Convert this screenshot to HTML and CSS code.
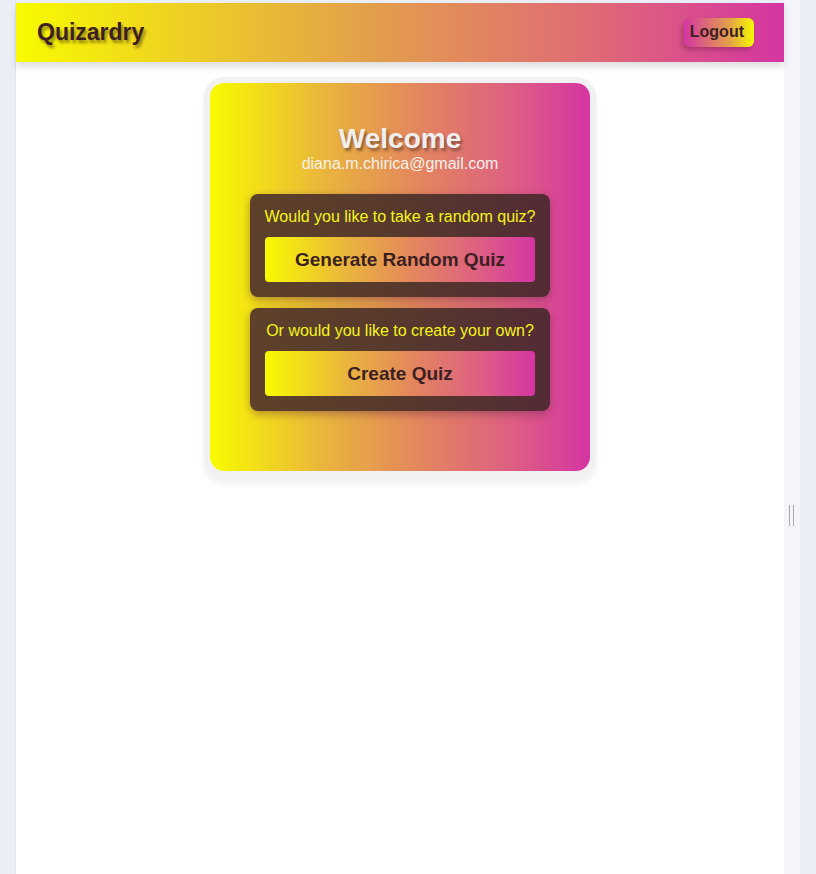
FILE: index.html
```html
<!DOCTYPE html>
<html>
<head>
<meta charset="utf-8">
<link rel="stylesheet" href="styles.css">
</head>
<body>
<div class="frame">
  <div class="gutter-left"></div>
  <div class="page">
    <header class="topbar">
      <div class="brand">Quizardry</div>
      <button class="logout">Logout</button>
    </header>
    <main class="content">
      <section class="card">
        <h1 class="welcome">Welcome</h1>
        <div class="email">diana.m.chirica@gmail.com</div>
        <div class="panel">
          <p class="prompt">Would you like to take a random quiz?</p>
          <button class="action">Generate Random Quiz</button>
        </div>
        <div class="panel">
          <p class="prompt">Or would you like to create your own?</p>
          <button class="action">Create Quiz</button>
        </div>
      </section>
    </main>
  </div>
  <div class="side-panel"><span class="handle"></span></div>
  <div class="gutter-right"></div>
</div>
</body>
</html>
```
FILE: styles.css
```css
html, body {
  margin: 0;
  padding: 0;
  height: 100%;
}
body {
  background: #e9eef7;
  font-family: "Liberation Sans", Arial, sans-serif;
  overflow: hidden;
}
.frame {
  display: flex;
  height: 874px;
}
.gutter-left {
  width: 15px;
  border-right: 1px solid #dfe4ee;
  background: #e9eef7;
}
.page {
  width: 768px;
  margin-top: 3px;
  background: #ffffff;
  display: flex;
  flex-direction: column;
}
.side-panel {
  width: 16px;
  background: #f3f5fa;
  position: relative;
}
.handle {
  position: absolute;
  left: 5px;
  top: 505px;
  width: 1px;
  height: 21px;
  border-left: 1px solid #a9a9a2;
  border-right: 1px solid #a9a9a2;
  padding: 0 1px;
}
.gutter-right {
  width: 16px;
  background: #e9eef7;
}
.topbar {
  height: 59px;
  display: flex;
  align-items: center;
  justify-content: space-between;
  padding: 0 30px 0 21px;
  background: linear-gradient(to right, #f8fb00, #e3a14a 45%, #df6a75 75%, #d535a2);
  box-shadow: 0 5px 7px rgba(0, 0, 0, 0.13);
  position: relative;
  z-index: 1;
}
.brand {
  font-size: 23px;
  font-weight: bold;
  color: #3b1f22;
  text-shadow: 2px 3px 3px rgba(70, 50, 20, 0.55);
  margin-top: -1px;
}
.logout {
  font-family: "Liberation Sans", Arial, sans-serif;
  font-size: 16px;
  font-weight: bold;
  color: #3b1f22;
  border: none;
  border-radius: 6px;
  padding: 0 10px 0 6px;
  height: 29px;
  margin-top: -1px;
  background: linear-gradient(to right, #d535a2, #e3a14a 65%, #f8fb00);
  box-shadow: -2px 3px 5px rgba(90, 20, 60, 0.35);
}
.content {
  display: flex;
  justify-content: center;
  padding-top: 21px;
}
.card {
  width: 380px;
  box-sizing: border-box;
  padding: 40px 40px 49px;
  border-radius: 14px;
  background: linear-gradient(to right, #f8fb00, #eab53c 30%, #e3865e 55%, #dd5e83 80%, #d535a2);
  box-shadow: 0 0 0 6px #f1f1f3, 0 7px 6px 6px rgba(0, 0, 0, 0.06);
  display: flex;
  flex-direction: column;
  align-items: center;
}
.welcome {
  margin: 0;
  font-size: 28px;
  line-height: 32px;
  font-weight: bold;
  color: #efefef;
  text-shadow: 2px 3px 3px rgba(80, 50, 40, 0.6);
}
.email {
  font-size: 16px;
  line-height: 18px;
  color: #f4f1ec;
  margin-bottom: 21px;
}
.panel {
  width: 300px;
  box-sizing: border-box;
  padding: 13px 8px 15px;
  border-radius: 8px;
  background: linear-gradient(to right, #5d412a, #573a2c 45%, #532b35);
  box-shadow: 0 3px 8px rgba(90, 30, 60, 0.4);
  display: flex;
  flex-direction: column;
  align-items: center;
  margin-bottom: 11px;
}
.prompt {
  margin: 0 0 10px;
  font-size: 16px;
  line-height: 20px;
  color: #f5f518;
  white-space: nowrap;
}
.action {
  width: 270px;
  height: 45px;
  border: none;
  border-radius: 4px;
  font-family: "Liberation Sans", Arial, sans-serif;
  font-size: 19px;
  font-weight: bold;
  color: #3b1f22;
  background: linear-gradient(to right, #f8fb00, #eab53c 30%, #e3865e 55%, #dd5e83 80%, #d535a2);
}
```
